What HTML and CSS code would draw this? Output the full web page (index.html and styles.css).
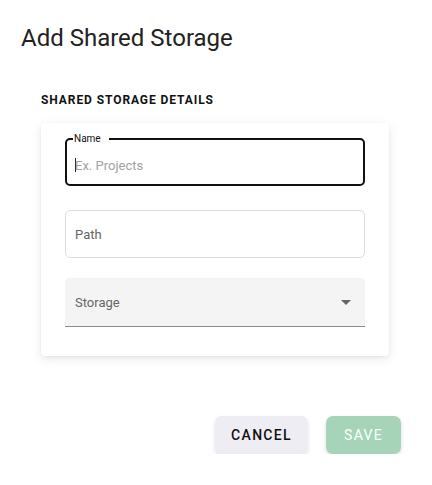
FILE: index.html
```html
<!DOCTYPE html>
<html>
<head>
<meta charset="utf-8">
<link rel="stylesheet" href="styles.css">
</head>
<body>
<div class="dialog">
  <h1 class="title">Add Shared Storage</h1>
  <div class="section">
    <h2 class="section-title">SHARED STORAGE DETAILS</h2>
    <div class="card">
      <div class="field outlined focused">
        <span class="float-label">Name</span>
        <span class="caret"></span><span class="placeholder">Ex. Projects</span>
      </div>
      <div class="field outlined">
        <span class="value">Path</span>
      </div>
      <div class="field filled">
        <span class="value">Storage</span>
        <span class="arrow"></span>
      </div>
    </div>
  </div>
  <div class="actions">
    <button class="btn cancel">CANCEL</button>
    <button class="btn save">SAVE</button>
  </div>
</div>
</body>
</html>
```
FILE: styles.css
```css
* { box-sizing: border-box; }
html, body { margin: 0; padding: 0; background: #fff; }
body { font-family: Roboto, "Liberation Sans", sans-serif; color: #222; }
.dialog { padding: 22px 31px 0 21px; width: 432px; }
.title { margin: 0; font-size: 24px; line-height: 32px; font-weight: 400; color: #222; }
.section { padding: 38px 0 0 20px; width: 368px; }
.section-title { margin: 0; font-size: 12px; line-height: 16px; font-weight: 700; letter-spacing: 0.92px; color: #111; }
.card { margin-top: 15px; background: #fff; border-radius: 4px; box-shadow: 0 3px 12px rgba(0,0,0,0.09), 0 1px 3px rgba(0,0,0,0.05); padding: 15px 24px 29px 24px; display: flex; flex-direction: column; }
.field { position: relative; height: 48px; display: flex; align-items: center; padding: 0 9px; font-size: 13px; }
.outlined { border: 1px solid #dcdcdc; border-radius: 5px; }
.outlined.focused { border: 2px solid #111; padding: 6px 8px 0 8px; }
.field + .field { margin-top: 24px; }
.field.filled { margin-top: 20px; height: 49px; padding: 0 10px; background: #f4f4f4; border-bottom: 1px solid #8a8a8a; border-radius: 4px 4px 0 0; justify-content: space-between; }
.float-label { position: absolute; top: -7px; left: 6px; padding: 0 8px 0 1px; background: #fff; font-size: 10px; line-height: 12px; color: #111; }
.caret { display: inline-block; width: 1px; height: 14px; background: #222; margin-right: -1px; }
.placeholder { color: #a2a2a2; }
.value { color: #666; }
.arrow { width: 0; height: 0; border-left: 5px solid transparent; border-right: 5px solid transparent; border-top: 5px solid #666; margin-right: 4px; }
.actions { display: flex; justify-content: flex-end; gap: 18px; margin-top: 60px; }
.btn { font-family: Roboto, "Liberation Sans", sans-serif; font-size: 14px; letter-spacing: 1.3px; height: 38px; border: none; border-radius: 7px; padding: 0; cursor: pointer; }
.cancel { width: 93px; background: #efedf4; color: #111; font-weight: 500; box-shadow: 0 2px 4px rgba(0,0,0,0.12); }
.save { width: 75px; background: #a5d4b9; color: #fff; font-weight: 400; box-shadow: 0 2px 4px rgba(0,0,0,0.14); }
```
